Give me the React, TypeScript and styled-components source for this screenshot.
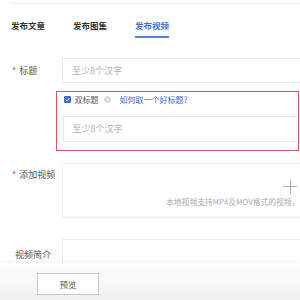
import React from "react";
import styled, { createGlobalStyle } from "styled-components";

const GlobalStyle = createGlobalStyle`
  html, body {
    margin: 0;
    padding: 0;
    background: #fff;
  }
  body {
    font-family: "Noto Sans CJK SC", "Noto Sans", sans-serif;
    color: #333;
  }
  * {
    box-sizing: border-box;
  }
`;

const Page = styled.div`
  width: 300px;
  height: 300px;
  overflow: hidden;
  display: flex;
  flex-direction: column;
  background: #fff;
`;

const TopLine = styled.div`
  height: 1px;
  margin: 3px 0 0 10px;
  background: #efefef;
`;

const Tabs = styled.div`
  display: flex;
  gap: 28px;
  padding-left: 11px;
  margin-top: 15px;
`;

const Tab = styled.div<{ $active?: boolean }>`
  font-size: 8.5px;
  line-height: 12px;
  font-weight: 600;
  white-space: nowrap;
  padding-bottom: 5px;
  color: ${(p) => (p.$active ? "#4a6fd6" : "#333")};
  border-bottom: 2px solid ${(p) => (p.$active ? "#5b7ddb" : "transparent")};
`;

const Form = styled.div`
  display: flex;
  flex-direction: column;
  margin-top: 20px;
`;

const Row = styled.div<{ $top?: number }>`
  display: flex;
  align-items: stretch;
  margin-top: ${(p) => p.$top ?? 0}px;
`;

const Label = styled.div<{ $pad?: number; $padTop?: number }>`
  width: 62px;
  flex: none;
  padding-left: ${(p) => p.$pad ?? 12}px;
  padding-top: ${(p) => p.$padTop ?? 0}px;
  font-size: 9px;
  line-height: 12px;
  color: #555;
  white-space: nowrap;
  display: flex;
  align-items: ${(p) => (p.$padTop !== undefined ? "flex-start" : "center")};
`;

const Star = styled.span`
  color: #e0535b;
  margin-right: 3px;
`;

const Input = styled.div<{ $h: number }>`
  flex: 1;
  height: ${(p) => p.$h}px;
  border: 1px solid #e7e7e7;
  border-right: none;
  padding-left: 9px;
  display: flex;
  align-items: center;
  font-size: 9px;
  color: #b0b0b0;
  white-space: nowrap;
`;

const DoubleBox = styled.div`
  margin: 8px 1px 0 56px;
  border: 1.5px solid #d3575f;
  padding: 1.5px 0 8px 5.5px;
  display: flex;
  flex-direction: column;
`;

const CheckRow = styled.div`
  display: flex;
  align-items: center;
  height: 12px;
  font-size: 8px;
  color: #555;
  white-space: nowrap;
`;

const Check = styled.span`
  width: 7px;
  height: 7px;
  border-radius: 1px;
  background: #3f6fd4;
  display: inline-flex;
  align-items: center;
  justify-content: center;
  margin: 0 4px 0 1px;
`;

const Help = styled.span`
  width: 7px;
  height: 7px;
  border-radius: 50%;
  background: #dadada;
  color: #fff;
  font-size: 5px;
  line-height: 7px;
  text-align: center;
  margin: 0 9px 0 5px;
`;

const Link = styled.span`
  color: #3b68d0;
`;

const InnerInput = styled(Input)`
  flex: none;
  margin-top: 10px;
`;

const Drop = styled.div`
  flex: 1;
  height: 55px;
  border: 1px solid #ececec;
  border-right: none;
  display: flex;
  flex-direction: column;
  overflow: hidden;
`;

const Plus = styled.div`
  align-self: flex-end;
  margin: 16px 3px 0 0;
  width: 14px;
  height: 14px;
  position: relative;
  &::before,
  &::after {
    content: "";
    position: absolute;
    background: #a9a9a9;
  }
  &::before {
    left: 0;
    right: 0;
    top: 6.5px;
    height: 1px;
  }
  &::after {
    top: 0;
    bottom: 0;
    left: 6.5px;
    width: 1px;
  }
`;

const Hint = styled.div`
  padding-left: 103px;
  margin-top: 2px;
  font-size: 7.8px;
  line-height: 11px;
  color: #aaa;
  white-space: nowrap;
`;

const TextArea = styled.div`
  flex: 1;
  height: 24px;
  border: 1px solid #ececec;
  border-right: none;
  border-bottom: none;
`;

const Footer = styled.div`
  flex: 1;
  display: flex;
  align-items: flex-start;
  padding: 10px 0 0 37px;
  background: linear-gradient(#fdfdfd, #f1f1f1);
  box-shadow: 0 -2px 4px rgba(0, 0, 0, 0.04);
`;

const Button = styled.div`
  width: 62px;
  height: 22px;
  border: 1px solid #c9c9c9;
  background: #fff;
  font-size: 8.5px;
  color: #555;
  display: flex;
  align-items: center;
  justify-content: center;
`;

export default function App() {
  return (
    <Page>
      <GlobalStyle />
      <TopLine />
      <Tabs>
        <Tab>发布文章</Tab>
        <Tab>发布图集</Tab>
        <Tab $active>发布视频</Tab>
      </Tabs>
      <Form>
        <Row>
          <Label>
            <Star>*</Star>标题
          </Label>
          <Input $h={25}>至少8个汉字</Input>
        </Row>
        <DoubleBox>
          <CheckRow>
            <Check>
              <svg width="5" height="5" viewBox="0 0 10 10">
                <path d="M1.5 5.2 L4 7.6 L8.6 2.6" stroke="#fff" strokeWidth="1.8" fill="none" />
              </svg>
            </Check>
            双标题
            <Help>?</Help>
            <Link>如何取一个好标题？</Link>
          </CheckRow>
          <InnerInput $h={26}>至少8个汉字</InnerInput>
        </DoubleBox>
        <Row $top={12}>
          <Label $padTop={6}>
            <Star>*</Star>添加视频
          </Label>
          <Drop>
            <Plus />
            <Hint>本地视频支持MP4及MOV格式的视频，</Hint>
          </Drop>
        </Row>
        <Row $top={21}>
          <Label $pad={15} $padTop={10}>
            视频简介
          </Label>
          <TextArea />
        </Row>
      </Form>
      <Footer>
        <Button>预览</Button>
      </Footer>
    </Page>
  );
}
